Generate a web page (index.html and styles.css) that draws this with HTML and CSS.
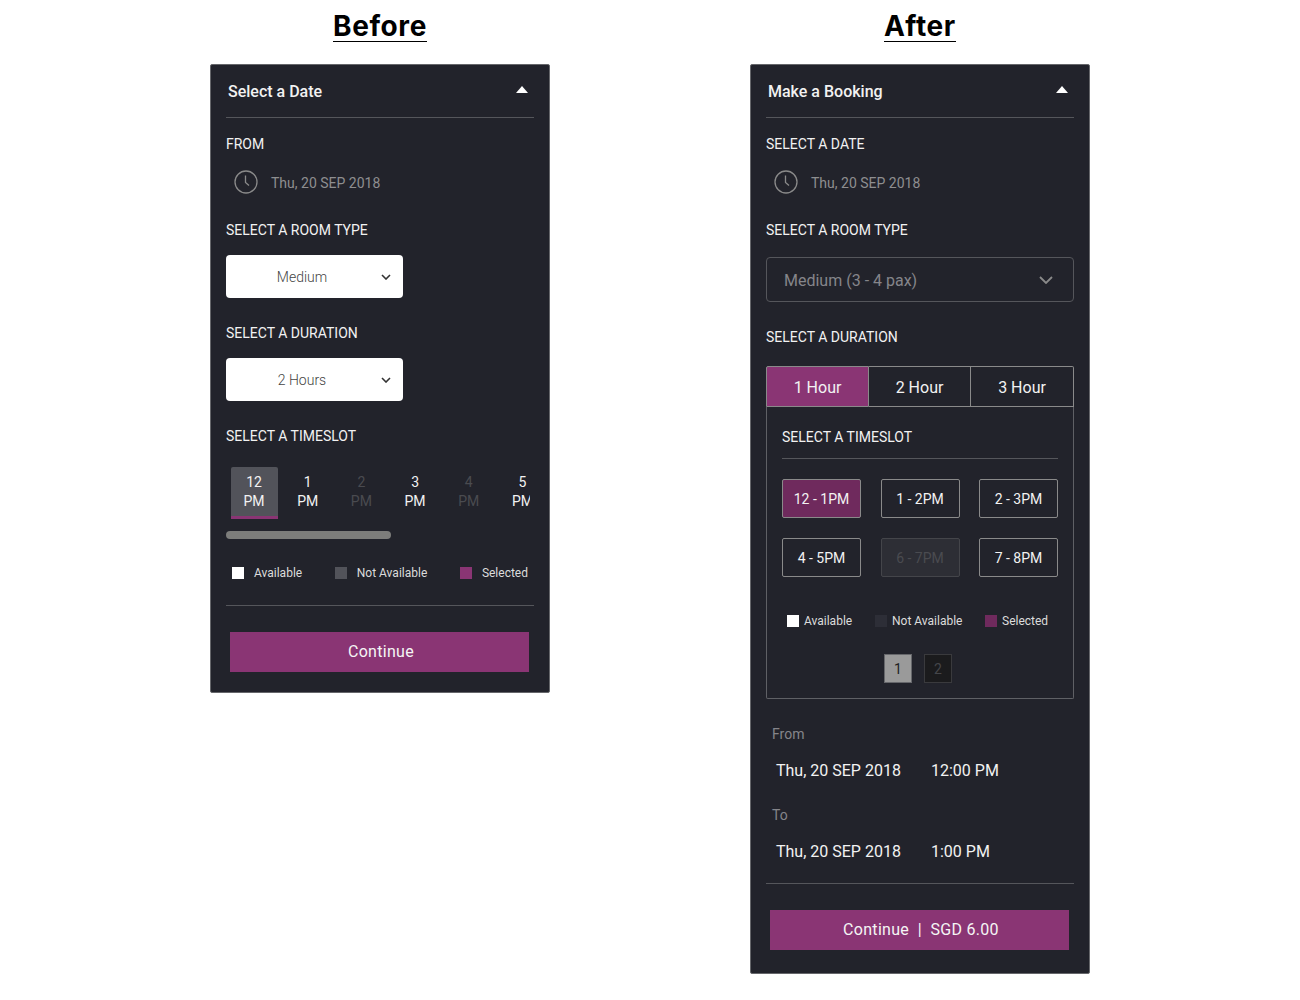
FILE: index.html
```html
<!DOCTYPE html>
<html lang="en">
<head>
    <meta charset="UTF-8">
    <title>Before and After</title>
    <link rel="stylesheet" href="styles.css">
</head>
<body>
    <div class="compare">
        <section class="column">
            <h1 class="heading"><span>Before</span></h1>
            <div class="panel">
                <div class="panel-head">
                    <span>Select a Date</span>
                    <i class="caret"></i>
                </div>
                <div class="label first">FROM</div>
                <div class="date-row">
                    <svg width="24" height="24" viewBox="0 0 24 24" fill="none" stroke="#8a8a8a" stroke-width="1.3"><circle cx="12" cy="12" r="11"/><path d="M11.5 5.5v7l3.5 3"/></svg>
                    <span>Thu, 20 SEP 2018</span>
                </div>
                <div class="label room-label">SELECT A ROOM TYPE</div>
                <div class="white-select">
                    <span>Medium</span>
                    <svg width="10" height="6" viewBox="0 0 10 6" fill="none" stroke="#333" stroke-width="1.6"><path d="M1 1l4 4 4-4"/></svg>
                </div>
                <div class="label select-gap">SELECT A DURATION</div>
                <div class="white-select">
                    <span>2 Hours</span>
                    <svg width="10" height="6" viewBox="0 0 10 6" fill="none" stroke="#333" stroke-width="1.6"><path d="M1 1l4 4 4-4"/></svg>
                </div>
                <div class="label select-gap">SELECT A TIMESLOT</div>
                <div class="hours">
                    <div class="hour active">12<br>PM</div>
                    <div class="hour">1<br>PM</div>
                    <div class="hour off">2<br>PM</div>
                    <div class="hour">3<br>PM</div>
                    <div class="hour off">4<br>PM</div>
                    <div class="hour">5<br>PM</div>
                </div>
                <div class="scrollbar"></div>
                <div class="legend legend-before">
                    <div class="key"><i class="sq white"></i>Available</div>
                    <div class="key"><i class="sq grey"></i>Not Available</div>
                    <div class="key"><i class="sq purple"></i>Selected</div>
                </div>
                <div class="rule rule-before"></div>
                <button class="continue">Continue</button>
            </div>
        </section>

        <section class="column">
            <h1 class="heading"><span>After</span></h1>
            <div class="panel panel-after">
                <div class="panel-head">
                    <span>Make a Booking</span>
                    <i class="caret"></i>
                </div>
                <div class="label first">SELECT A DATE</div>
                <div class="date-row">
                    <svg width="24" height="24" viewBox="0 0 24 24" fill="none" stroke="#8a8a8a" stroke-width="1.3"><circle cx="12" cy="12" r="11"/><path d="M11.5 5.5v7l3.5 3"/></svg>
                    <span>Thu, 20 SEP 2018</span>
                </div>
                <div class="label room-label">SELECT A ROOM TYPE</div>
                <div class="dark-select">
                    <span>Medium (3 - 4 pax)</span>
                    <svg width="14" height="8" viewBox="0 0 14 8" fill="none" stroke="#8a8a8a" stroke-width="1.8"><path d="M1 1l6 6 6-6"/></svg>
                </div>
                <div class="label duration-label">SELECT A DURATION</div>
                <div class="tabs">
                    <div class="tab active">1 Hour</div>
                    <div class="tab">2 Hour</div>
                    <div class="tab">3 Hour</div>
                </div>
                <div class="tab-body">
                    <div class="label">SELECT A TIMESLOT</div>
                    <div class="rule body-rule"></div>
                    <div class="slots">
                        <div class="slot active">12 - 1PM</div>
                        <div class="slot">1 - 2PM</div>
                        <div class="slot">2 - 3PM</div>
                        <div class="slot">4 - 5PM</div>
                        <div class="slot off">6 - 7PM</div>
                        <div class="slot">7 - 8PM</div>
                    </div>
                    <div class="legend legend-after">
                        <div class="key"><i class="sq white"></i>Available</div>
                        <div class="key"><i class="sq dim"></i>Not Available</div>
                        <div class="key"><i class="sq plum"></i>Selected</div>
                    </div>
                    <div class="pager">
                        <div class="page current">1</div>
                        <div class="page">2</div>
                    </div>
                </div>
                <div class="summary">
                    <div class="sum-label">From</div>
                    <div class="sum-row"><span>Thu, 20 SEP 2018</span><span>12:00 PM</span></div>
                    <div class="sum-label to">To</div>
                    <div class="sum-row"><span>Thu, 20 SEP 2018</span><span>1:00 PM</span></div>
                </div>
                <div class="rule rule-after"></div>
                <button class="continue">Continue&nbsp; | &nbsp;SGD 6.00</button>
            </div>
        </section>
    </div>
</body>
</html>
```

FILE: styles.css
```css
body {
    margin: 0;
    background: white;
    font-family: Roboto, "Liberation Sans", sans-serif;
    color: #f2f2f2;
}
.compare {
    display: flex;
    gap: 200px;
    padding: 0 0 0 210px;
}
.column {
    width: 340px;
}
.heading {
    margin: 0;
    height: 64px;
    padding-top: 12px;
    box-sizing: border-box;
    text-align: center;
    color: black;
    font-family: Inter, "Liberation Sans", sans-serif;
    font-size: 28px;
    font-weight: 700;
    letter-spacing: 0.6px;
    line-height: 29px;
}
.heading span {
    display: inline-block;
    border-bottom: 1px solid black;
}
.panel {
    box-sizing: border-box;
    width: 340px;
    padding: 0 15px 20px;
    background: #22232b;
    border: 1px solid #66676b;
    border-radius: 2px;
}
.panel-after {
    padding-bottom: 23px;
}
.panel-head {
    display: flex;
    justify-content: space-between;
    align-items: center;
    height: 52px;
    padding: 0 6px 0 2px;
    border-bottom: 1px solid #55565b;
    font-size: 16px;
    font-weight: 500;
}
.caret {
    width: 0;
    height: 0;
    border-left: 6px solid transparent;
    border-right: 6px solid transparent;
    border-bottom: 7px solid white;
    margin-bottom: 3px;
}
.label {
    font-size: 14px;
    line-height: 20px;
}
.first {
    margin-top: 16px;
}
.date-row {
    display: flex;
    align-items: center;
    gap: 13px;
    height: 24px;
    margin: 16px 0 0 8px;
    font-size: 14px;
    color: #8e8e90;
}
.date-row span {
    padding-top: 2px;
}
.room-label {
    margin-top: 26px;
}
.white-select {
    display: flex;
    align-items: center;
    justify-content: space-between;
    box-sizing: border-box;
    width: 177px;
    height: 43px;
    margin-top: 15px;
    padding: 0 12px 0 0;
    background: white;
    border-radius: 4px;
    font-size: 14px;
    font-weight: 300;
    color: #444;
}
.white-select span {
    flex: 1;
    text-align: center;
    padding-right: 3px;
}
.select-gap {
    margin-top: 25px;
}
.hours {
    display: flex;
    width: 304px;
    margin-top: 21px;
    padding-left: 5px;
    box-sizing: border-box;
    overflow: hidden;
}
.hour {
    flex: none;
    box-sizing: border-box;
    width: 47px;
    height: 52px;
    margin-right: 6.7px;
    padding: 6px 1px 0 0;
    text-align: center;
    font-size: 14px;
    line-height: 19px;
}
.hour.active {
    background: #52535a;
    border-bottom: 3px solid #8a3574;
    border-radius: 2px 2px 0 0;
}
.hour.off {
    color: #4a4b50;
}
.scrollbar {
    width: 165px;
    height: 8px;
    margin-top: 12px;
    background: #7d7d7b;
    border-radius: 4px;
}
.legend {
    display: flex;
    font-size: 12px;
    line-height: 14px;
    color: #dcdcdc;
}
.key {
    display: flex;
    align-items: center;
}
.sq {
    width: 12px;
    height: 12px;
}
.white { background: white; }
.grey { background: #52535a; }
.purple { background: #8a3574; }
.dim { background: #2d2e37; }
.plum { background: #6f2a5d; }
.legend-before {
    justify-content: space-between;
    box-sizing: border-box;
    width: 302px;
    margin-top: 27px;
    padding-left: 6px;
}
.legend-before .sq {
    margin-right: 10px;
}
.rule {
    height: 1px;
    background: #55565b;
}
.rule-before {
    margin-top: 25px;
}
.continue {
    display: block;
    width: 299px;
    height: 40px;
    margin: 26px 0 0 4px;
    padding: 0 0 2px 3px;
    background: #8a3574;
    border: none;
    font-family: inherit;
    font-size: 16px;
    letter-spacing: 0.3px;
    color: #f5f5f5;
}
.dark-select {
    display: flex;
    align-items: center;
    justify-content: space-between;
    box-sizing: border-box;
    height: 45px;
    margin-top: 17px;
    padding: 0 20px 0 17px;
    border: 1px solid #55565b;
    border-radius: 4px;
    font-size: 16px;
    color: #85858a;
}
.dark-select span {
    padding-top: 2px;
}
.duration-label {
    margin-top: 25px;
}
.tabs {
    display: grid;
    grid-template-columns: 103px 102px 1fr;
    margin-top: 19px;
}
.tab {
    height: 41px;
    box-sizing: border-box;
    border: 1px solid #8a8a8a;
    border-left: none;
    text-align: center;
    font-size: 16px;
    line-height: 41px;
}
.tab:first-child {
    border-left: 1px solid #8a8a8a;
    border-radius: 2px 0 0 0;
}
.tab:last-child {
    border-radius: 0 2px 0 0;
}
.tab.active {
    background: #8a3574;
}
.tab-body {
    box-sizing: border-box;
    height: 292px;
    padding: 20px 15px 0;
    border: 1px solid #5f6065;
    border-top: none;
    border-radius: 0 0 2px 2px;
}
.body-rule {
    margin-top: 11px;
}
.slots {
    display: grid;
    grid-template-columns: repeat(3, 79px);
    justify-content: space-between;
    row-gap: 20px;
    margin-top: 20px;
}
.slot {
    box-sizing: border-box;
    height: 39px;
    border: 1px solid #8a8a8a;
    border-radius: 2px;
    text-align: center;
    font-size: 14px;
    line-height: 38px;
}
.slot.active {
    background: #6f2a5d;
}
.slot.off {
    background: #2d2e35;
    border-color: #44454a;
    color: #4a4b50;
}
.legend-after {
    margin: 37px 0 0 5px;
}
.legend-after .key:nth-child(1) { width: 88px; }
.legend-after .key:nth-child(2) { width: 110px; }
.legend-after .sq {
    margin-right: 5px;
}
.pager {
    display: flex;
    justify-content: center;
    gap: 12px;
    margin: 26px 4px 0 0;
}
.page {
    box-sizing: border-box;
    width: 28px;
    height: 29px;
    background: #1b1b1d;
    border: 1px solid #3a3a3d;
    text-align: center;
    font-size: 14px;
    line-height: 28px;
    color: #45464a;
}
.page.current {
    background: #9a9a9a;
    border-color: #66676b;
    color: #222;
}
.summary {
    padding: 25px 0 0 6px;
}
.sum-label {
    font-size: 14px;
    line-height: 20px;
    color: #85858a;
}
.sum-label.to {
    margin-top: 24px;
}
.sum-row {
    display: flex;
    margin: 17px 0 0 4px;
    font-size: 16px;
    line-height: 20px;
}
.sum-row span:first-child {
    width: 155px;
}
.rule-after {
    margin-top: 21px;
}
```
